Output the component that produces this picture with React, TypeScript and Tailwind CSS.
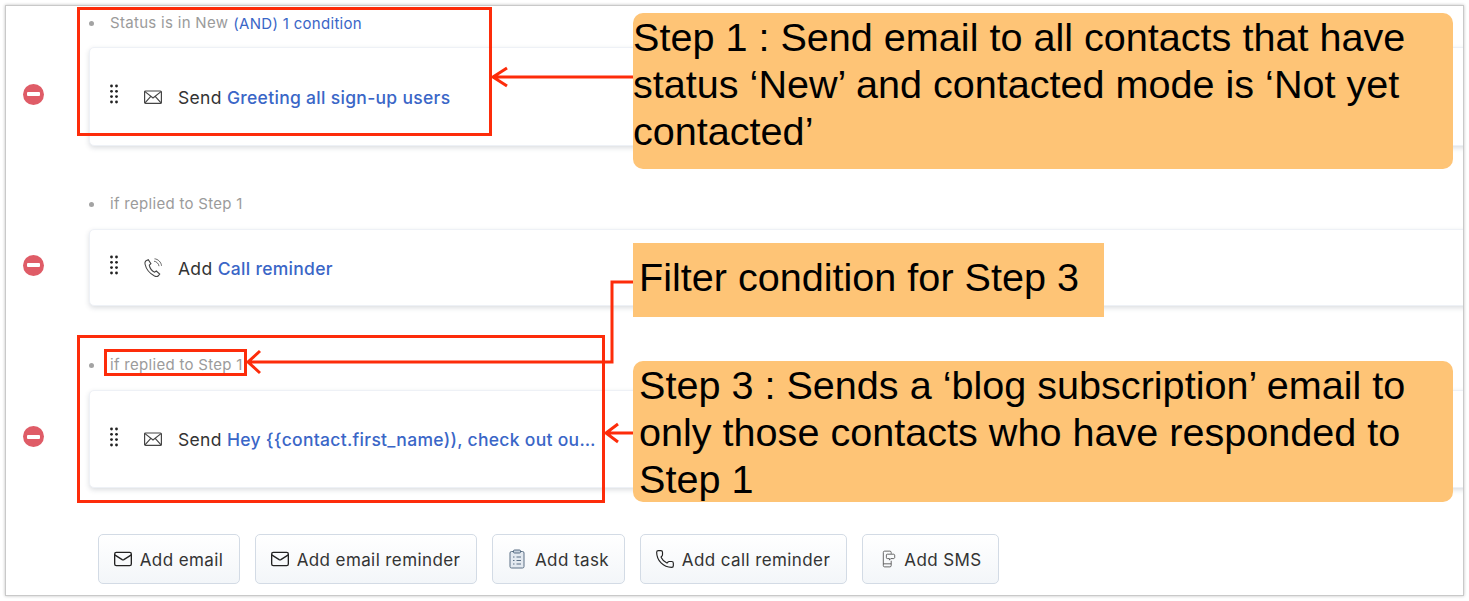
import { Mail, Phone } from 'lucide-react'
import type { ReactNode } from 'react'

function RemoveIcon() {
  return (
    <div className="w-[21px] h-[21px] rounded-full bg-[#df5c67] flex items-center justify-center">
      <div className="w-[13px] h-[4px] rounded-[1px] bg-white" />
    </div>
  )
}

function DragDots() {
  return (
    <svg className="-mt-[5px]" width="10" height="20" viewBox="0 0 10 20" fill="#222">
      {[2, 7.3, 12.6, 18].map(y => (
        <g key={y}>
          <circle cx="2.500" cy={y} r="1.400" />
          <circle cx="7.500" cy={y} r="1.400" />
        </g>
      ))}
    </svg>
  )
}

function EnvelopeIcon() {
  return (
    <svg width="20" height="16" viewBox="0 0 20 16" fill="none" stroke="#444" strokeWidth="1.2">
      <rect x="1.6" y="2" width="16.8" height="12.4" rx="1" />
      <path d="M2 2.6l8 6.4 8-6.4M2 13.8l5.8-6.4M18 13.8l-5.8-6.4" />
    </svg>
  )
}

function CallIcon() {
  return (
    <svg width="20" height="20" viewBox="0 0 20 20" fill="none" stroke="#444" strokeWidth="1.1">
      <path d="M3 2.8l2.3-1.2 2.6 4-1.6 1.6c.5 2.8 3 6 5.3 7l1.7-1.2 3.4 3-1.6 2c-1 .8-2.4.6-3.6 0C7 15.600 3 10.600 2 6c-.3-1.300 0-2.400 1-3.200z" />
      <path d="M11 3.200c2.400.2 4.800 2.400 5 5M11.500 .8c3.400.2 6.800 3.400 7 7" strokeWidth="0.8" />
    </svg>
  )
}

function TaskIcon() {
  return (
    <svg className="mx-[3px]" width="16" height="20" viewBox="0 0 16 20" fill="none" stroke="#5a6f85" strokeWidth="1">
      <rect x="1" y="2.500" width="14" height="16.500" rx="1.500" fill="#e3e9f0" />
      <rect x="4.500" y="1" width="7" height="3" rx="1" fill="#c5d0dc" />
      <path d="M4 8h1.500M7.500 8H12M4 11.500h1.500M7.500 11.500H12M4 15h1.500M7.500 15H12" />
    </svg>
  )
}

function SmsIcon() {
  return (
    <svg className="ml-[5px] mr-px" width="14" height="20" viewBox="0 0 16 20" fill="none" stroke="#555" strokeWidth="1">
      <path d="M10.500 4V2.500a1.500 1.500 0 0 0-1.500-1.500H3a1.500 1.500 0 0 0-1.500 1.500v15A1.500 1.500 0 0 0 3 19h6a1.500 1.500 0 0 0 1.500-1.500V12" />
      <path d="M1.500 15.500h9" />
      <path d="M6 4.500h7.500a1.500 1.500 0 0 1 1 1v3a1.500 1.500 0 0 1-1 1H10l-1.500 1.800V9.500H6a1 1 0 0 1-1-1v-3a1 1 0 0 1 1-1z" />
    </svg>
  )
}

interface StepProps {
  caption: ReactNode
  height: string
  icon: ReactNode
  verb: string
  title: string
  captionGap: string
}

function Step({ caption, height, icon, verb, title, captionGap }: StepProps) {
  return (
    <div className="flex items-end">
      <div className={`w-[83px] flex-none flex justify-center pl-[11px] pr-[40px] pb-[5px] ${height} items-center`}>
        <RemoveIcon />
      </div>
      <div className="flex-1 min-w-0">
        <div className={`flex items-center h-[20px] pt-[2px] text-[15px] tracking-[0.3px] text-[#9b9b9b] ${captionGap}`}>
          <span className="w-[5px] h-[5px] rounded-full bg-[#a3a3a3] mr-[16px]" />
          {caption}
        </div>
        <div className={`${height} -mr-[20px] rounded-[5px] bg-white border border-[#eef1f6] shadow-[0_2px_5px_rgba(60,70,90,0.18)] flex items-center pl-[19px]`}>
          <DragDots />
          <span className="w-[20px] ml-[24px] flex justify-center">{icon}</span>
          <span className="ml-[15px] pt-[3px] text-[17.5px] tracking-[0.3px] text-[#333] whitespace-nowrap">
            {verb} <span className="text-[#3a66c7] font-medium">{title}</span>
          </span>
        </div>
      </div>
    </div>
  )
}

function AddButton({ icon, label, width }: { icon: ReactNode; label: string; width: string }) {
  return (
    <button className={`${width} h-[50px] flex items-center justify-center gap-[7px] pr-[2px] rounded-[5px] border border-[#d3dbe5] bg-gradient-to-b from-white to-[#f3f6f9] text-[17px] tracking-[0.4px] text-[#333]`}>
      {icon}
      <span className="pt-[3px]">{label}</span>
    </button>
  )
}

function Callout({ className, children }: { className: string; children: ReactNode }) {
  return (
    <div className={`absolute bg-[#fec476] text-black text-[39.6px] leading-[47px] whitespace-nowrap font-['Liberation_Sans',Arial,sans-serif] ${className}`}>
      {children}
    </div>
  )
}

export default function App() {
  return (
    <div className="relative w-[1469px] h-[601px] bg-white overflow-hidden font-['Inter',sans-serif]">
      {/* Screenshot frame */}
      <div className="mx-[5px] mt-[5px] w-[1459px] h-[591px] bg-white border border-[#c9c9c9] shadow-[0_0_3px_rgba(0,0,0,0.25)] overflow-hidden">
        <div className="pt-[6px] flex flex-col">
          <Step
            caption={
              <>
                Status is in New
                <span className="ml-[5px] mt-[2px] text-[#3a66c7]">(AND) 1 condition</span>
              </>
            }
            captionGap="mb-[15px]"
            height="h-[99px]"
            icon={<EnvelopeIcon />}
            verb="Send"
            title="Greeting all sign-up users"
          />
          <div className="h-[47px]" />
          <Step
            caption="if replied to Step 1"
            captionGap="mb-[16px]"
            height="h-[77px]"
            icon={<CallIcon />}
            verb="Add"
            title="Call reminder"
          />
          <div className="h-[48px]" />
          <Step
            caption="if replied to Step 1"
            captionGap="mb-[16px]"
            height="h-[98px]"
            icon={<EnvelopeIcon />}
            verb="Send"
            title="Hey {{contact.first_name)), check out ou…"
          />
          <div className="flex gap-[15px] pl-[92px] pt-[46px]">
            <AddButton width="w-[142px]" label="Add email" icon={<Mail size={20} strokeWidth={1.6} color="#222" />} />
            <AddButton width="w-[222px]" label="Add email reminder" icon={<Mail size={20} strokeWidth={1.6} color="#222" />} />
            <AddButton width="w-[133px]" label="Add task" icon={<TaskIcon />} />
            <AddButton width="w-[207px]" label="Add call reminder" icon={<Phone size={20} strokeWidth={1.4} color="#222" />} />
            <AddButton width="w-[137px]" label="Add SMS" icon={<SmsIcon />} />
          </div>
        </div>
      </div>

      {/* Annotation boxes */}
      <div className="absolute left-[77px] top-[7px] w-[415px] h-[129px] border-[3px] border-[#fd2c0a]" />
      <div className="absolute left-[77px] top-[335px] w-[528px] h-[168px] border-[3px] border-[#fd2c0a]" />
      <div className="absolute left-[104px] top-[349px] w-[143px] h-[27px] border-[3px] border-[#fd2c0a]" />

      {/* Arrows */}
      <svg className="absolute left-0 top-0" width="1469" height="601" fill="none" stroke="#fd2c0a" strokeWidth="3">
        <path d="M634 77H493M507 68l-14 9 14 9" />
        <path d="M634 282H612V362H248M260 351l-12 11 12 11" />
        <path d="M634 433H606M618 424l-12 9 12 9" />
      </svg>

      <Callout className="left-[633px] top-[13px] w-[820px] h-[156px] rounded-[10px] pt-px">
        Step 1 : Send email to all contacts that have<br />
        status ‘New’ and contacted mode is ‘Not yet<br />
        contacted’
      </Callout>
      <Callout className="left-[633px] top-[243px] w-[471px] h-[74px] pl-[6px] pt-[11px]">
        Filter condition for Step 3
      </Callout>
      <Callout className="left-[633px] top-[361px] w-[820px] h-[141px] rounded-[10px] pl-[6px] pt-px">
        Step 3 : Sends a ‘blog subscription’ email to<br />
        only those contacts who have responded to<br />
        Step 1
      </Callout>
    </div>
  )
}
